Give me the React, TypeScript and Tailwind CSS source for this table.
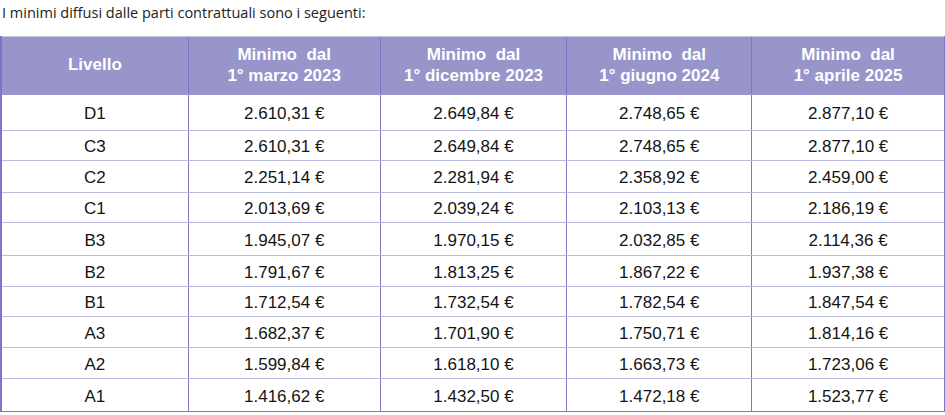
import React from "react";

const cols = ["w-[187px]", "w-[192px]", "w-[187px]", "w-[185px]", "w-[192px]"];
const heights = ["h-[36px]", "h-[30px]", "h-[32px]", "h-[30px]", "h-[33px]", "h-[31px]", "h-[30px]", "h-[31px]", "h-[31px]", "h-[33px]"];

const headers = [
  ["Livello"],
  ["Minimo\u00a0 dal", "1° marzo 2023"],
  ["Minimo\u00a0 dal", "1° dicembre 2023"],
  ["Minimo\u00a0 dal", "1° giugno 2024"],
  ["Minimo\u00a0 dal", "1° aprile 2025"],
];

const rows = [
  ["D1", "2.610,31 €", "2.649,84 €", "2.748,65 €", "2.877,10 €"],
  ["C3", "2.610,31 €", "2.649,84 €", "2.748,65 €", "2.877,10 €"],
  ["C2", "2.251,14 €", "2.281,94 €", "2.358,92 €", "2.459,00 €"],
  ["C1", "2.013,69 €", "2.039,24 €", "2.103,13 €", "2.186,19 €"],
  ["B3", "1.945,07 €", "1.970,15 €", "2.032,85 €", "2.114,36 €"],
  ["B2", "1.791,67 €", "1.813,25 €", "1.867,22 €", "1.937,38 €"],
  ["B1", "1.712,54 €", "1.732,54 €", "1.782,54 €", "1.847,54 €"],
  ["A3", "1.682,37 €", "1.701,90 €", "1.750,71 €", "1.814,16 €"],
  ["A2", "1.599,84 €", "1.618,10 €", "1.663,73 €", "1.723,06 €"],
  ["A1", "1.416,62 €", "1.432,50 €", "1.472,18 €", "1.523,77 €"],
];

export default function App() {
  return (
    <div className="w-[945px] h-[415px] bg-white overflow-hidden">
      <div className="h-[36px] pl-[2px] pt-[3px] text-[14.5px] leading-[20px] text-[#222] font-['Open_Sans',sans-serif]">
        I minimi diffusi dalle parti contrattuali sono i seguenti:
      </div>
      <div className="border-l-2 border-r border-[#7a78c6] font-['Liberation_Sans',Arial,sans-serif]">
        <div className="flex h-[59px] bg-[#9795ca] border-t border-t-[#c4c4dc] border-b border-b-[#9795ca]">
          {headers.map((h, i) => (
            <div
              key={i}
              className={`${cols[i]} flex flex-col items-center justify-center ${i < 4 ? "border-r border-r-[#7a78c6]" : ""} text-white font-bold text-[17px] leading-[21px] whitespace-pre pb-[2px]`}
            >
              {h.map((l, j) => (
                <span key={j}>{l}</span>
              ))}
            </div>
          ))}
        </div>
        {rows.map((r, ri) => (
          <div
            key={ri}
            className={`flex ${heights[ri]} border-b ${ri === rows.length - 1 ? "border-b-[#7a78c6]" : "border-b-[#b9b8df]"}`}
          >
            {r.map((c, ci) => (
              <div
                key={ci}
                className={`${cols[ci]} flex items-center justify-center pt-[3px] ${ci < 4 ? "border-r border-r-[#7a78c6]" : ""} text-[17px] text-[#141414]`}
              >
                {c}
              </div>
            ))}
          </div>
        ))}
      </div>
    </div>
  );
}
